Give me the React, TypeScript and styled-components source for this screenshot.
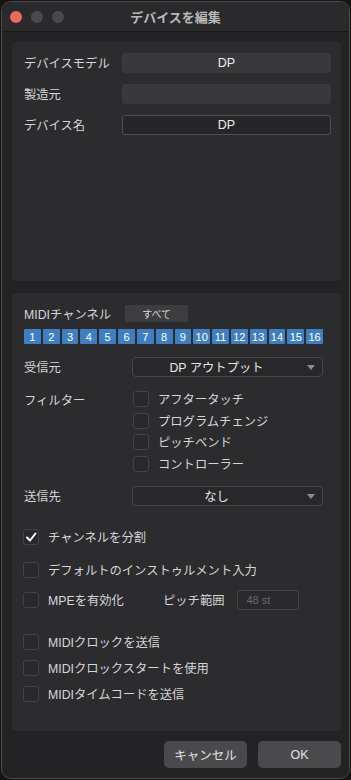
import React from "react";
import styled, { createGlobalStyle } from "styled-components";

const Global = createGlobalStyle`
  html, body { margin: 0; padding: 0; background: #151516; }
  body { font-family: "Liberation Sans", "Noto Sans CJK JP", sans-serif; -webkit-font-smoothing: antialiased; }
  * { box-sizing: border-box; }
`;

const Window = styled.div`
  margin: 1px;
  width: 349px;
  height: 778px;
  border: 1px solid #4a4a4d;
  border-radius: 10px;
  background: #232325;
  overflow: hidden;
  display: flex;
  flex-direction: column;
`;

const TitleBar = styled.div`
  height: 30px;
  flex: none;
  background: #2a2a2c;
  border-bottom: 1px solid #19191b;
  display: flex;
  align-items: center;
  position: relative;
  padding-left: 8px;
  gap: 9px;
`;

const Light = styled.span<{ $c: string }>`
  width: 12px;
  height: 12px;
  border-radius: 50%;
  background: ${(p) => p.$c};
`;

const Title = styled.div`
  position: absolute;
  left: 0;
  right: 0;
  top: 0;
  bottom: 0;
  display: flex;
  align-items: center;
  justify-content: center;
  font-size: 13px;
  font-weight: bold;
  color: #b9b9bb;
  pointer-events: none;
`;

const Body = styled.div`
  flex: 1;
  padding: 10px 8px 0 10px;
  display: flex;
  flex-direction: column;
`;

const Panel = styled.div<{ $h: number }>`
  height: ${(p) => p.$h}px;
  background: #2c2c2f;
  border-radius: 4px;
  display: flex;
  flex-direction: column;
`;

const TopPanel = styled(Panel)`
  padding: 11px 10px 0 12px;
  gap: 11px;
`;

const LowerPanel = styled(Panel)`
  margin-top: 12px;
  padding: 12px 10px 0 12px;
`;

const FieldRow = styled.div`
  display: flex;
  align-items: center;
  height: 20px;
`;

const Label = styled.span<{ $w?: number }>`
  font-size: 12.3px;
  color: #d6d6d8;
  width: ${(p) => (p.$w ? `${p.$w}px` : "auto")};
  flex: none;
  white-space: nowrap;
`;

const Field = styled.div<{ $edit?: boolean }>`
  flex: 1;
  height: 20px;
  border-radius: 3px;
  display: flex;
  align-items: center;
  justify-content: center;
  font-size: 12.5px;
  color: #ececee;
  background: ${(p) => (p.$edit ? "#262629" : "#39393c")};
  border: 1px solid ${(p) => (p.$edit ? "#505053" : "#39393c")};
`;

const MidiRow = styled.div`
  display: flex;
  align-items: center;
  height: 17px;
`;

const AllButton = styled.div`
  margin-left: 14px;
  width: 63px;
  height: 17px;
  background: #3d3d40;
  color: #d6d6d8;
  font-size: 10px;
  display: flex;
  align-items: center;
  justify-content: center;
`;

const Channels = styled.div`
  margin-top: 7px;
  width: 299px;
  display: grid;
  grid-template-columns: repeat(16, 1fr);
  gap: 2px;
`;

const Chan = styled.div`
  height: 15px;
  background: #3f7fc1;
  color: #ffffff;
  font-size: 11px;
  display: flex;
  align-items: center;
  justify-content: center;
  border-radius: 1px;
`;

const SelectRow = styled.div<{ $mt: number }>`
  margin-top: ${(p) => p.$mt}px;
  display: flex;
  align-items: center;
  height: 20px;
`;

const Select = styled.div`
  width: 191px;
  height: 20px;
  background: #28282b;
  border: 1px solid #47474a;
  border-radius: 4px;
  display: flex;
  align-items: center;
  justify-content: center;
  padding-right: 22px;
  position: relative;
  font-size: 12.3px;
  color: #e6e6e8;
`;

const Arrow = styled.span`
  position: absolute;
  right: 7px;
  top: 7px;
  width: 0;
  height: 0;
  border-left: 4px solid transparent;
  border-right: 4px solid transparent;
  border-top: 5px solid #8c8c8f;
`;

const FilterBlock = styled.div`
  margin-top: 14px;
  display: flex;
  align-items: flex-start;
`;

const FilterList = styled.div`
  display: flex;
  flex-direction: column;
  gap: 5.7px;
`;

const Box = styled.span`
  width: 16px;
  height: 16px;
  flex: none;
  border-radius: 3px;
  background: #29292c;
  border: 1px solid #434346;
  display: flex;
  align-items: center;
  justify-content: center;
`;

const Check = styled.label<{ $mt?: number; $w?: number }>`
  margin-top: ${(p) => p.$mt ?? 0}px;
  display: flex;
  align-items: center;
  gap: 9px;
  height: 16px;
  font-size: 12.3px;
  color: #d6d6d8;
  white-space: nowrap;
  width: ${(p) => (p.$w ? `${p.$w}px` : "auto")};
  flex: none;
`;

const CheckCol = styled.div`
  margin-left: -1px;
  display: flex;
  flex-direction: column;
`;

const MpeRow = styled.div`
  margin-top: 12px;
  height: 20px;
  display: flex;
  align-items: center;
`;

const SmallInput = styled.div`
  margin-left: 12px;
  width: 62px;
  height: 20px;
  border: 1px solid #444447;
  border-radius: 3px;
  background: #2a2a2d;
  font-size: 11px;
  color: #68686b;
  display: flex;
  align-items: center;
  padding-left: 9px;
`;

const Footer = styled.div`
  margin-top: 10px;
  display: flex;
  justify-content: flex-end;
  gap: 11px;
`;

const Button = styled.div`
  width: 83px;
  height: 27px;
  border-radius: 5px;
  background: #4a4a4d;
  color: #e2e2e4;
  font-size: 12.5px;
  display: flex;
  align-items: center;
  justify-content: center;
`;

const Tick = () => (
  <svg width="12" height="12" viewBox="0 0 12 12">
    <polyline points="2,6.5 5,9.5 10.5,2.5" fill="none" stroke="#ffffff" strokeWidth="2" strokeLinecap="round" strokeLinejoin="round" />
  </svg>
);

const CheckItem: React.FC<{ text: string; on?: boolean; mt?: number; w?: number }> = ({ text, on, mt, w }) => (
  <Check $mt={mt} $w={w}>
    <Box>{on && <Tick />}</Box>
    {text}
  </Check>
);

export default function App() {
  const chans = Array.from({ length: 16 }, (_, i) => i + 1);
  return (
    <>
      <Global />
      <Window>
        <TitleBar>
          <Light $c="#ec6a5e" />
          <Light $c="#4a4a4c" />
          <Light $c="#4a4a4c" />
          <Title>デバイスを編集</Title>
        </TitleBar>
        <Body>
          <TopPanel $h={239}>
            <FieldRow>
              <Label $w={98}>デバイスモデル</Label>
              <Field>DP</Field>
            </FieldRow>
            <FieldRow>
              <Label $w={98}>製造元</Label>
              <Field />
            </FieldRow>
            <FieldRow>
              <Label $w={98}>デバイス名</Label>
              <Field $edit>DP</Field>
            </FieldRow>
          </TopPanel>
          <LowerPanel $h={438}>
            <MidiRow>
              <Label>MIDIチャンネル</Label>
              <AllButton>すべて</AllButton>
            </MidiRow>
            <Channels>
              {chans.map((c) => (
                <Chan key={c}>{c}</Chan>
              ))}
            </Channels>
            <SelectRow $mt={13}>
              <Label $w={108}>受信元</Label>
              <Select>
                DP アウトプット
                <Arrow />
              </Select>
            </SelectRow>
            <FilterBlock>
              <Label $w={109}>フィルター</Label>
              <FilterList>
                <CheckItem text="アフタータッチ" />
                <CheckItem text="プログラムチェンジ" />
                <CheckItem text="ピッチベンド" />
                <CheckItem text="コントローラー" />
              </FilterList>
            </FilterBlock>
            <SelectRow $mt={14}>
              <Label $w={108}>送信先</Label>
              <Select>
                なし
                <Arrow />
              </Select>
            </SelectRow>
            <CheckCol>
              <CheckItem text="チャンネルを分割" on mt={23} />
              <CheckItem text="デフォルトのインストゥルメント入力" mt={17} />
              <MpeRow>
                <CheckItem text="MPEを有効化" w={140} />
                <Label>ピッチ範囲</Label>
                <SmallInput>48 st</SmallInput>
              </MpeRow>
              <CheckItem text="MIDIクロックを送信" mt={24} />
              <CheckItem text="MIDIクロックスタートを使用" mt={10} />
              <CheckItem text="MIDIタイムコードを送信" mt={10} />
            </CheckCol>
          </LowerPanel>
          <Footer>
            <Button>キャンセル</Button>
            <Button>OK</Button>
          </Footer>
        </Body>
      </Window>
    </>
  );
}
